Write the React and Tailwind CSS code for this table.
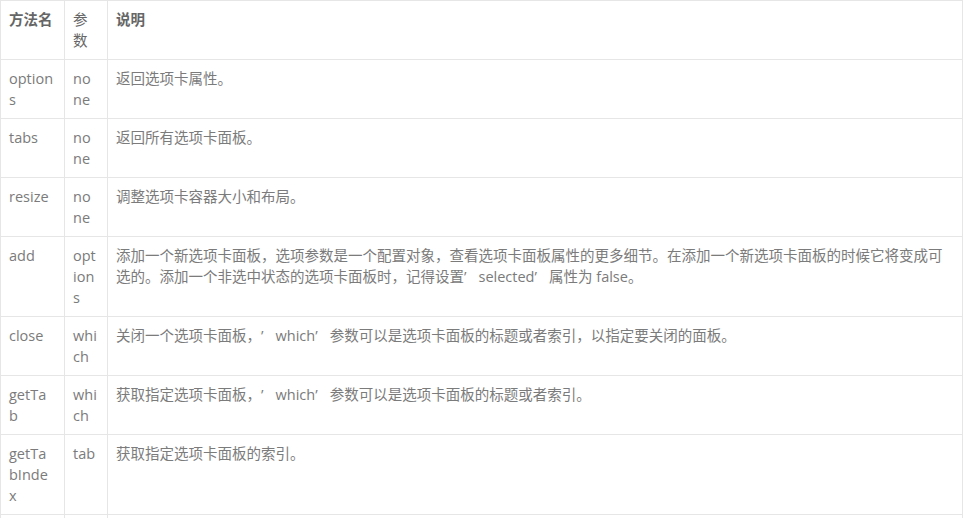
import React from 'react';

const Q = () => <span className="inline-block w-[1em]">’</span>;

const rows = [
  { name: 'options', param: 'none', desc: '返回选项卡属性。' },
  { name: 'tabs', param: 'none', desc: '返回所有选项卡面板。' },
  { name: 'resize', param: 'none', desc: '调整选项卡容器大小和布局。' },
  {
    name: 'add',
    param: 'options',
    desc: (
      <>
        添加一个新选项卡面板，选项参数是一个配置对象，查看选项卡面板属性的更多细节。在添加一个新选项卡面板的时候它将变成可选的。添加一个非选中状态的选项卡面板时，记得设置<Q />selected<Q />属性为 false。
      </>
    ),
  },
  {
    name: 'close',
    param: 'which',
    desc: (
      <>
        关闭一个选项卡面板，<Q />which<Q />参数可以是选项卡面板的标题或者索引，以指定要关闭的面板。
      </>
    ),
  },
  {
    name: 'getTab',
    param: 'which',
    desc: (
      <>
        获取指定选项卡面板，<Q />which<Q />参数可以是选项卡面板的标题或者索引。
      </>
    ),
  },
  { name: 'getTabIndex', param: 'tab', desc: '获取指定选项卡面板的索引。' },
  { name: 'getSelected', param: 'none', desc: '获取选中的选项卡面板。' },
];

const cell = 'border border-[#e6e6e6] py-2 align-top break-all';

export default function App() {
  return (
    <div className="bg-white w-[964px] font-['Open_Sans','Noto_Sans_CJK_SC',sans-serif] text-[14.5px] leading-[21px] text-[#7b7b7b]">
      <table className="table-fixed border-collapse w-[963px]">
        <colgroup>
          <col className="w-[64px]" />
          <col className="w-[43px]" />
          <col />
        </colgroup>
        <thead>
          <tr className="text-left text-[#666]">
            <th className={`${cell} pl-2 pr-[10px] font-bold`}>方法名</th>
            <th className={`${cell} px-2 font-normal`}>参数</th>
            <th className={`${cell} px-2 font-bold`}>说明</th>
          </tr>
        </thead>
        <tbody>
          {rows.map((r) => (
            <tr key={r.name}>
              <td className={`${cell} pl-2 pr-[10px]`}>{r.name}</td>
              <td className={`${cell} px-2`}>{r.param}</td>
              <td className={`${cell} px-2`}>{r.desc}</td>
            </tr>
          ))}
        </tbody>
      </table>
    </div>
  );
}
